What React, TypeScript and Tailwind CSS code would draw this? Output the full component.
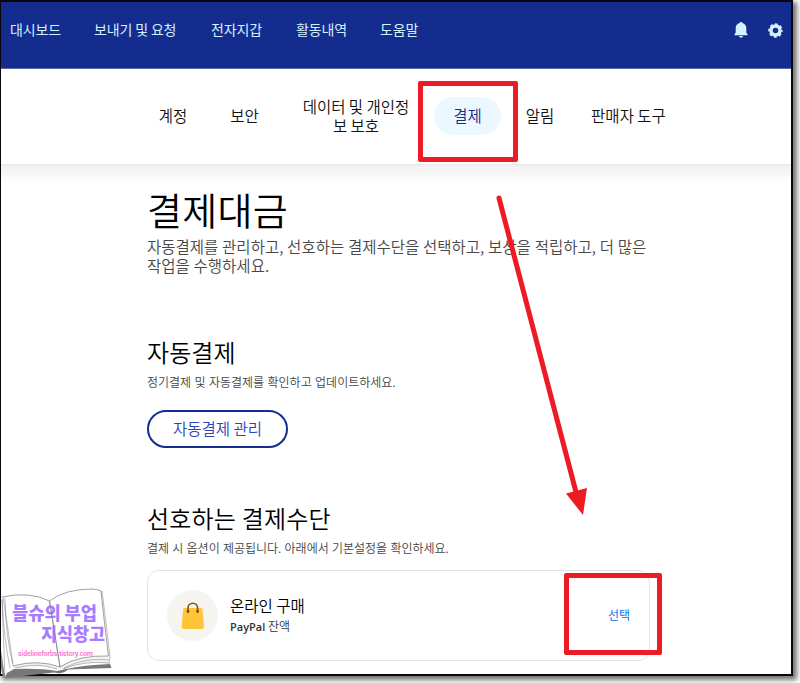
const mainLinks = [
  { label: '대시보드', width: 'w-[84px]' },
  { label: '보내기 및 요청', width: 'w-[117px]' },
  { label: '전자지갑', width: 'w-[85px]' },
  { label: '활동내역', width: 'w-[84px]' },
  { label: '도움말', width: 'w-[60px]' },
]

const tabs = [
  { label: '계정', width: 'w-[72px]' },
  { label: '보안', width: 'w-[71px]' },
  { label: '데이터 및 개인정보 보호', width: 'w-[152px] px-5 break-all' },
  { label: '결제', width: 'w-[72px]', active: true },
  { label: '알림', width: 'w-[72px]' },
  { label: '판매자 도구', width: 'w-[105px]' },
]

function BellIcon() {
  return (
    <svg className="w-[14px] h-[16px]" viewBox="0 0 14 16" fill="#d3f1ff">
      <path d="M7 0c.8 0 1.300.5 1.400 1.100C11 1.800 12.300 3.700 12.300 6.200V10.500l1.200 1.700v1H.5v-1l1.200-1.700V6.200C1.700 3.700 3 1.800 5.600 1.100 5.700.5 6.200 0 7 0z" />
      <path d="M5 14h4c-.1 1-.9 1.600-2 1.600S5.100 15 5 14z" />
    </svg>
  )
}

function GearIcon() {
  return (
    <svg className="w-[15px] h-[15px]" viewBox="0 0 15 15" fill="none" stroke="#d3f1ff">
      <circle cx="7.500" cy="7.500" r="4.500" strokeWidth="3.400" />
      <circle cx="7.500" cy="7.500" r="6.300" strokeWidth="1.900" strokeDasharray="2.700 2.248" strokeDashoffset="1.350" />
    </svg>
  )
}

function BagIcon() {
  return (
    <svg className="w-[24px] h-[28px]" viewBox="0 0 24 28" fill="none">
      <path d="M3.800 6h16q1.500 0 1.700 1.500l1.400 17Q23 27 20.800 27H2.800Q.5 27 .7 24.500l1.400-17Q2.300 6 3.800 6z" fill="#ffc439" />
      <path d="M7 9.500V6a4.800 4.800 0 0 1 9.600 0v3.500" stroke="#7a5310" strokeWidth="1.600" />
      <circle cx="7" cy="9.600" r="1.400" fill="#6b480c" />
      <circle cx="16.600" cy="9.600" r="1.400" fill="#6b480c" />
    </svg>
  )
}

function BookLogo() {
  return (
    <svg className="absolute left-0 top-[582px] w-[116px] h-[98px]" viewBox="0 582 116 98" fill="none">
      <path d="M2 597Q30 590 49.500 601Q65 589 101 589L110.500 657L109 668L66 669Q62 674 55 670L5 677L2 666z" fill="#fff" />
      <path d="M1 650L5 677L3 678L1 668z" fill="#888" />
      <path d="M7 673L14 669Q40 668 57 671L66 669Q84 665 110 664L111.500 668L68 669.500Q62 675 54 672.500L5 678z" fill="#777" />
      <path d="M13 666Q38 659 58 667Q78 655 108 657L109 664Q85 661 65 669L56 670Q38 663 15 669z" fill="#f4f4f4" />
      <g stroke="#777" strokeWidth="0.700">
        <path d="M2 597Q30 591 49.500 601Q65 589 92 589Q99 589.500 101 591" />
        <path d="M101 591Q104 620 108.500 656Q78 655 60 667" />
        <path d="M49.500 601Q55 635 60 667Q38 659 13 666" />
        <path d="M3 597Q9 635 13 666M2 599Q4 640 10 668M5 598Q6 640 13 664M2 600L5 677" strokeWidth="0.500" />
        <path d="M102 591L110 656L109 664M64 668Q85 657 109 660M63 669Q85 660 109 663" strokeWidth="0.500" />
        <path d="M15 668Q39 662 57 669" strokeWidth="0.500" />
      </g>
      <g fill="#a97cff" fontFamily='"Noto Sans CJK KR", sans-serif' fontWeight="900" fontSize="18">
        <text x="12" y="620" textLength="85" lengthAdjust="spacingAndGlyphs">블슈의 부업</text>
        <text x="41" y="641" textLength="64" lengthAdjust="spacingAndGlyphs">지식창고</text>
      </g>
      <text x="18" y="656" textLength="75" lengthAdjust="spacing" fill="#ff6fcf" fontFamily="Roboto, sans-serif" fontWeight="600" fontSize="6.800">
        sidelineforbs.tistory.com
      </text>
      <path d="M49.500 601Q55 635 60 667" stroke="#777" strokeWidth="0.500" />
    </svg>
  )
}

function Arrow() {
  return (
    <svg className="absolute left-[490px] top-[190px] w-[105px] h-[330px]" viewBox="490 190 105 330">
      <path d="M499 198L576.500 494" stroke="#ed1c24" strokeWidth="5" strokeLinecap="round" />
      <path d="M566 493.500L587 488L583 515z" fill="#ed1c24" />
    </svg>
  )
}

export default function App() {
  return (
    <div className="relative w-[800px] h-[683px] overflow-hidden bg-white font-['Noto_Sans_CJK_KR',sans-serif] font-[350] text-black">
      <div className="w-[793px] h-[676px] border-2 border-l-1 border-[#08080c] overflow-hidden shadow-[3px_3px_5px_1px_rgba(0,0,0,0.55)]">
        <header className="h-[67px] bg-[#142c8e] border-b border-[#5b6bb0] flex items-start justify-between pl-[9px] pr-2 text-[#d3f1ff]">
          <nav className="flex pt-[17px] text-[14px] leading-5 font-normal tracking-[-0.15px] whitespace-nowrap">
            {mainLinks.map((link) => (
              <a key={link.label} className={link.width}>{link.label}</a>
            ))}
          </nav>
          <div className="flex items-center gap-5 pt-5">
            <BellIcon />
            <GearIcon />
          </div>
        </header>

        <nav className="h-[96px] pl-[136px] pb-px flex items-center text-center text-[15.500px] leading-[19px] text-[#111] border-b border-[#e9e9e9]">
          {tabs.map((tab) => (
            <a key={tab.label} className={tab.width}>
              {tab.active ? (
                <span className="block ml-[2px] mr-[3px] pt-[9px] pb-[10px] rounded-full bg-[#ebf8ff] text-[#142c8e]">{tab.label}</span>
              ) : (
                <span className="block pb-px">{tab.label}</span>
              )}
            </a>
          ))}
        </nav>

        <main className="h-full pl-[146px] bg-linear-to-b from-[#f0f0f0] from-0% to-white to-[18px]">
          <h1 className="pt-[19px] text-[38px] leading-[50px] tracking-[0.300px]">결제대금</h1>
          <p className="mt-[3px] w-[510px] text-[15.500px] leading-[19px] [word-spacing:0.35px] text-[#484848] whitespace-nowrap">
            자동결제를 관리하고, 선호하는 결제수단을 선택하고, 보상을 적립하고, 더 많은
            <br />
            작업을 수행하세요.
          </p>

          <h2 className="mt-[61px] text-[24px] leading-8 tracking-[0.100px]">자동결제</h2>
          <p className="mt-[5px] text-[12px] leading-[18px] [word-spacing:0.7px] text-[#444]">정기결제 및 자동결제를 확인하고 업데이트하세요.</p>
          <button className="mt-[19px] pb-[2px] block w-[141px] h-[38px] rounded-full border-2 border-[#142c8e] text-[15.500px] leading-[32px] text-[#2b45bd]">
            자동결제 관리
          </button>

          <h2 className="mt-[54px] text-[24px] leading-8 tracking-[0.200px]">선호하는 결제수단</h2>
          <p className="mt-[5px] text-[12px] leading-[18px] [word-spacing:0.55px] text-[#444]">
            결제 시 옵션이 제공됩니다. 아래에서 기본설정을 확인하세요.
          </p>
          <div className="mt-[13px] w-[503px] h-[91px] flex items-center rounded-xl border border-[#e3e3e3] bg-white pl-[19px] pr-[19px]">
            <div className="w-[51px] h-[51px] shrink-0 rounded-full bg-[#f5f4ef] flex items-center justify-center">
              <BagIcon />
            </div>
            <div className="ml-3 pb-px flex-1">
              <div className="text-[15.500px] leading-[22px] text-black">온라인 구매</div>
              <div className="text-[12px] leading-5 text-[#333]">
                <span className="font-['Open_Sans',sans-serif] font-semibold text-[11px]">PayPal</span> 잔액
              </div>
            </div>
            <a className="pb-[2px] text-[12px] font-normal text-[#1072eb]">선택</a>
          </div>
        </main>
      </div>

      <BookLogo />

      {/* Guide marks over the page */}
      <div className="absolute left-[418px] top-[81px] w-[100px] h-[81px] border-5 border-[#ed1c24] rounded-xs" />
      <div className="absolute left-[564px] top-[573px] w-[98px] h-[82px] border-5 border-[#ed1c24] rounded-xs" />
      <Arrow />
    </div>
  )
}
